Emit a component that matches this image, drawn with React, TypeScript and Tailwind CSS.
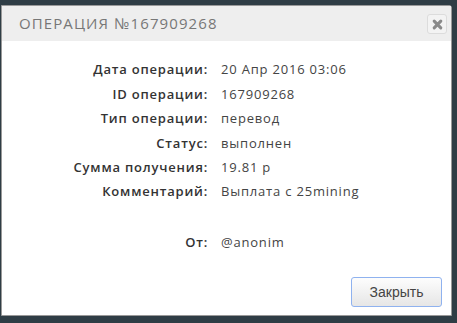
import React from 'react';

const rows: [string, string][] = [
  ['Дата операции:', '20 Апр 2016 03:06'],
  ['ID операции:', '167909268'],
  ['Тип операции:', 'перевод'],
  ['Статус:', 'выполнен'],
  ['Сумма получения:', '19.81 р'],
  ['Комментарий:', 'Выплата с 25mining'],
];

function Row({ label, value }: { label: string; value: string }) {
  return (
    <div className="flex h-[24.4px] items-center">
      <div className="w-[206px] text-right font-semibold text-[13px] tracking-[0.8px] text-[#333]" style={{ fontFamily: '"Open Sans", sans-serif' }}>
        {label}
      </div>
      <div className="pl-[13px] text-[13px] tracking-[0.8px] text-[#444]" style={{ fontFamily: '"Open Sans", sans-serif' }}>
        {value}
      </div>
    </div>
  );
}

export default function App() {
  return (
    <div className="w-[457px] h-[323px] bg-[#2f3d45] pt-[5px] pl-[1px] overflow-hidden">
      <div className="w-[451px] h-[311px] flex flex-col bg-white border border-[#999] rounded-tr-[3px]">
        <div className="h-[35px] flex items-center justify-between bg-[#eeeeee] pl-[17px] pr-[4px]">
          <span className="text-[15px] tracking-[1.1px] text-[#777] font-['Open_Sans',sans-serif]">ОПЕРАЦИЯ №167909268</span>
          <button className="w-[20px] h-[20px] mt-[1px] flex items-center justify-center rounded-[3px] border border-[#dcdcdc] bg-[#f3f3f3]">
            <svg width="11" height="11" viewBox="0 0 10 10">
              <path d="M2 2 L8 8 M8 2 L2 8" stroke="#8a8a8a" strokeWidth="2.8" strokeLinecap="round" />
            </svg>
          </button>
        </div>
        <div className="flex flex-col pt-[17px]">
          {rows.map(([l, v]) => (
            <Row key={l} label={l} value={v} />
          ))}
          <div className="h-[26px]" />
          <Row label="От:" value="@anonim" />
        </div>
        <div className="flex-1 flex items-end justify-end pr-[9px] pb-[8px]">
          <button className="w-[91px] h-[30px] rounded-[3px] border border-[#8fb2ef] bg-gradient-to-b from-[#fdfdfd] to-[#e6e6e6] text-[14px] text-[#444] font-['Liberation_Sans',sans-serif]">
            Закрыть
          </button>
        </div>
      </div>
    </div>
  );
}
